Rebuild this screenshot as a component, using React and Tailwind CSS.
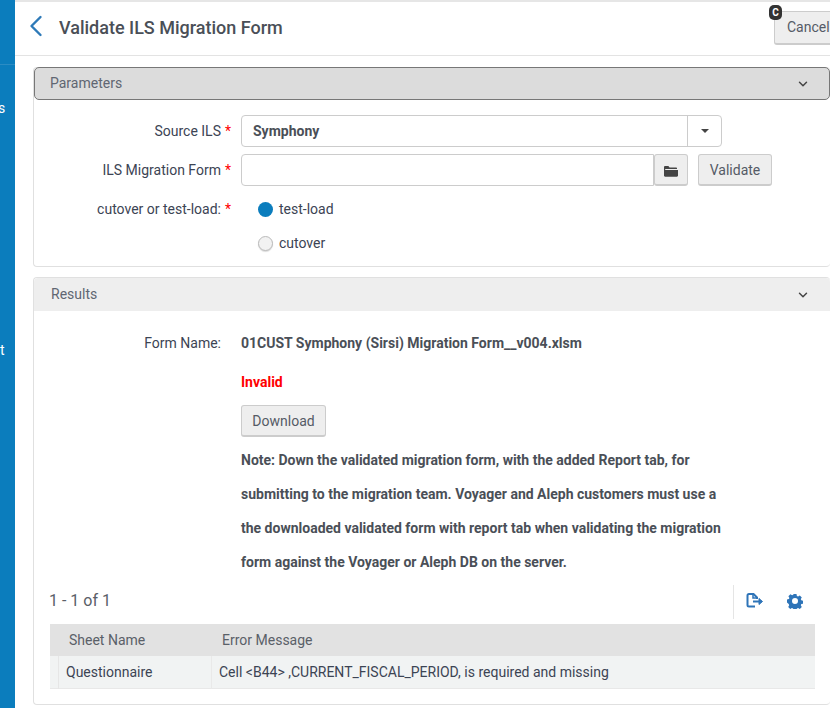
import React from 'react';
import { ChevronLeft, ChevronDown } from 'lucide-react';

const Req = () => <span className="text-[#f00] ml-[4px]">*</span>;

const FolderIcon = () => (
  <svg width="14" height="12" viewBox="0 0 14 12" className="text-[#444]">
    <path d="M0 2.2C0 1.5.5 1 1.2 1h3.2l1.2 1.4h6.6c.5 0 .8.3.8.8V4H1.5L0 6.5z" fill="currentColor" />
    <path d="M0 5h14v5.6c0 .6-.5 1.1-1.1 1.1H1.1C.5 11.700 0 11.200 0 10.600z" fill="currentColor" />
  </svg>
);

const ExportIcon = () => (
  <svg width="18" height="16" viewBox="0 0 18 16" fill="none" stroke="#2e74b8" strokeWidth="2" className="mb-[2px]">
    <path d="M9 13.500 H3 C1.900 13.500 1.500 13 1.500 12 V2.500 C1.500 1.700 2 1 3 1 H7.500 L11 4.500 V6" />
    <path d="M7 1 V5 H11" strokeWidth="1.500" />
    <path d="M7 8.500 H14.500" />
    <path d="M13 5.500 L16.500 8.500 L13 11.500 Z" fill="#2e74b8" strokeWidth="1" />
  </svg>
);

const GearIcon = () => (
  <svg width="16" height="16" viewBox="0 0 16 16" className="mb-[2px]">
    <path
      fillRule="evenodd"
      fill="#2e74b8"
      d="M6.500 1h3l.4 1.900 1.200.5 1.700-1 2 2-1 1.700.5 1.200 1.900.4v3l-1.900.4-.5 1.200 1 1.700-2 2-1.700-1-1.200.5-.4 1.500h-3l-.4-1.500-1.200-.5-1.700 1-2-2 1-1.700-.5-1.200L0 9.500v-3l1.900-.4.5-1.200-1-1.700 2-2 1.700 1 1.200-.5zM8 5a3 3 0 1 0 0 6 3 3 0 0 0 0-6z"
    />
  </svg>
);

const App = () => {
  return (
    <div className="flex h-[708px] w-[830px] overflow-hidden bg-white font-['Roboto',sans-serif] text-[14px] text-[#3c4454]">
      {/* sidebar, cut off by the window edge */}
      <div className="w-[15px] shrink-0 bg-[#0b7dbd] text-white overflow-hidden">
        <div className="h-[65px] border-b border-[#2b8cc4]" />
        <div className="h-[20px] mt-[33px] leading-[20px] text-[14px] -ml-[2px] whitespace-nowrap">s</div>
        <div className="h-[20px] mt-[222px] leading-[20px] text-[14px] ml-0 whitespace-nowrap">t</div>
      </div>

      <div className="flex-1 min-w-0 flex flex-col">
        <div className="h-[2px] bg-[#e6e6e6]" />

        {/* header */}
        <div className="h-[54px] shrink-0 border-b border-[#e3e3e3] flex items-center overflow-hidden">
          <ChevronLeft className="w-[36px] h-[36px] ml-[3px] mb-[6px] text-[#2e7ab8]" strokeWidth={1.600} />
          <h1 className="ml-[5px] mb-[3px] text-[18px] font-medium text-[#4a4f57]">Validate ILS Migration Form</h1>
          <div className="relative ml-auto mt-[-2px] shrink-0">
            <span className="absolute -top-[6px] -left-[5px] w-[13px] h-[15px] rounded-[5px] bg-[#333] text-white text-[10px] font-bold leading-[15px] text-center z-10">
              C
            </span>
            <button className="w-[56px] h-[34px] pl-[12px] text-left bg-[#eee] border border-[#ccc] border-b-2 rounded-l-[3px] border-r-0 text-[#555b66] whitespace-nowrap">
              Cancel
            </button>
          </div>
        </div>

        <div className="pl-[18px] flex flex-col">
          {/* parameters */}
          <div className="mt-[11px] h-[200px] border border-[#e0e0e0] rounded-[4px] border-r-0">
            <div className="h-[33px] -mt-px bg-[#dcdcdc] border border-[#777] rounded-[5px] flex items-center justify-between pl-[15px] pr-[19px] text-[#606672]">
              <span>Parameters</span>
              <ChevronDown className="w-[14px] h-[14px] text-[#444]" strokeWidth={2.500} />
            </div>

            <div className="mt-[15px] grid grid-cols-[197px_1fr] gap-x-[10px] items-center">
              <div className="text-right whitespace-nowrap">Source ILS<Req /></div>
              <div className="flex h-[32px] w-[481px] border border-[#ccc] rounded-[4px]">
                <div className="flex-1 pl-[11px] font-bold leading-[30px] text-[#4a4f57]">Symphony</div>
                <div className="w-[34px] border-l border-[#ccc] flex items-center justify-center">
                  <span className="w-0 h-0 border-x-[4px] border-x-transparent border-t-[4px] border-t-[#444]" />
                </div>
              </div>

              <div className="text-right whitespace-nowrap mt-[7px]">ILS Migration Form<Req /></div>
              <div className="flex h-[32px] mt-[7px]">
                <div className="w-[413px] border border-[#ccc] rounded-l-[4px]" />
                <button className="w-[34px] flex items-center justify-center bg-[#eee] border border-[#ccc] border-b-2 rounded-[3px] pt-[3px]">
                  <FolderIcon />
                </button>
                <button className="w-[74px] ml-[10px] pt-[2px] bg-[#eee] border border-[#ccc] border-b-2 rounded-[3px] text-[#555b66]">
                  Validate
                </button>
              </div>

              <div className="text-right whitespace-nowrap mt-[9px]">cutover or test-load:<Req /></div>
              <div className="flex items-center h-[28px] mt-[9px] pl-[17px]">
                <span className="w-[15px] h-[15px] rounded-full bg-[#0b7dbd]" />
                <span className="ml-[6px]">test-load</span>
              </div>

              <div />
              <div className="flex items-center h-[28px] mt-[6px] pl-[17px]">
                <span className="w-[15px] h-[15px] rounded-full bg-[#f2f2f2] border border-[#bbb] shadow-[0_1px_1px_rgba(0,0,0,0.15)]" />
                <span className="ml-[6px]">cutover</span>
              </div>
            </div>
          </div>

          {/* results */}
          <div className="mt-[10px] h-[428px] border border-[#e0e0e0] rounded-[4px] border-r-0">
            <div className="h-[33px] bg-[#eeeeee] rounded-t-[4px] flex items-center justify-between pl-[17px] pr-[20px] text-[#606672]">
              <span>Results</span>
              <ChevronDown className="w-[14px] h-[14px] text-[#444]" strokeWidth={2.500} />
            </div>

            <div className="mt-[22px] grid grid-cols-[187px_1fr] gap-x-[20px]">
              <div className="text-right leading-[20px]">Form Name:</div>
              <div className="font-bold leading-[20px] text-[#4a4f57]">01CUST Symphony (Sirsi) Migration Form__v004.xlsm</div>
              <div />
              <div>
                <div className="mt-[19px] font-bold leading-[20px] text-[#f00]">Invalid</div>
                <button className="mt-[13px] w-[85px] h-[32px] pt-[2px] bg-[#eee] border border-[#ccc] border-b-2 rounded-[3px] text-[#555b66]">
                  Download
                </button>
                <p className="mt-[6px] w-[490px] font-bold leading-[34px] text-[#4a4f57]">
                  Note: Down the validated migration form, with the added Report tab, for submitting to the migration team. Voyager and Aleph customers must use a the downloaded validated form with report tab when validating the migration form against the Voyager or Aleph DB on the server.
                </p>
              </div>
            </div>

            <div className="mt-[5px] flex items-center pl-[15px] pr-[27px] h-[35px]">
              <span className="mb-[2px] text-[16px] text-[#5a6068]">1 - 1 of 1</span>
              <div className="ml-auto h-[34px] border-l border-[#e5e5e5] flex items-center pl-[12px] gap-[23px]">
                <ExportIcon />
                <GearIcon />
              </div>
            </div>

            <div className="mt-[5px] ml-[16px] mr-[15px] text-[14px]">
              <div className="h-[32px] bg-[#e2e2e2] flex items-center text-[#5a6068]">
                <span className="w-[172px] pl-[19px]">Sheet Name</span>
                <span>Error Message</span>
              </div>
              <div className="h-[33px] bg-[#f1f3f3] flex items-center border-b border-[#e8e8e8]">
                <span className="w-[153px] ml-[8px] pl-[7px] border-l border-[#e6e6e6] leading-[33px]">Questionnaire</span>
                <span className="pl-[7px] border-l border-[#e9e9e9] leading-[33px]">Cell &lt;B44&gt; ,CURRENT_FISCAL_PERIOD, is required and missing</span>
              </div>
            </div>
          </div>
        </div>
      </div>
    </div>
  );
};

export default App;
